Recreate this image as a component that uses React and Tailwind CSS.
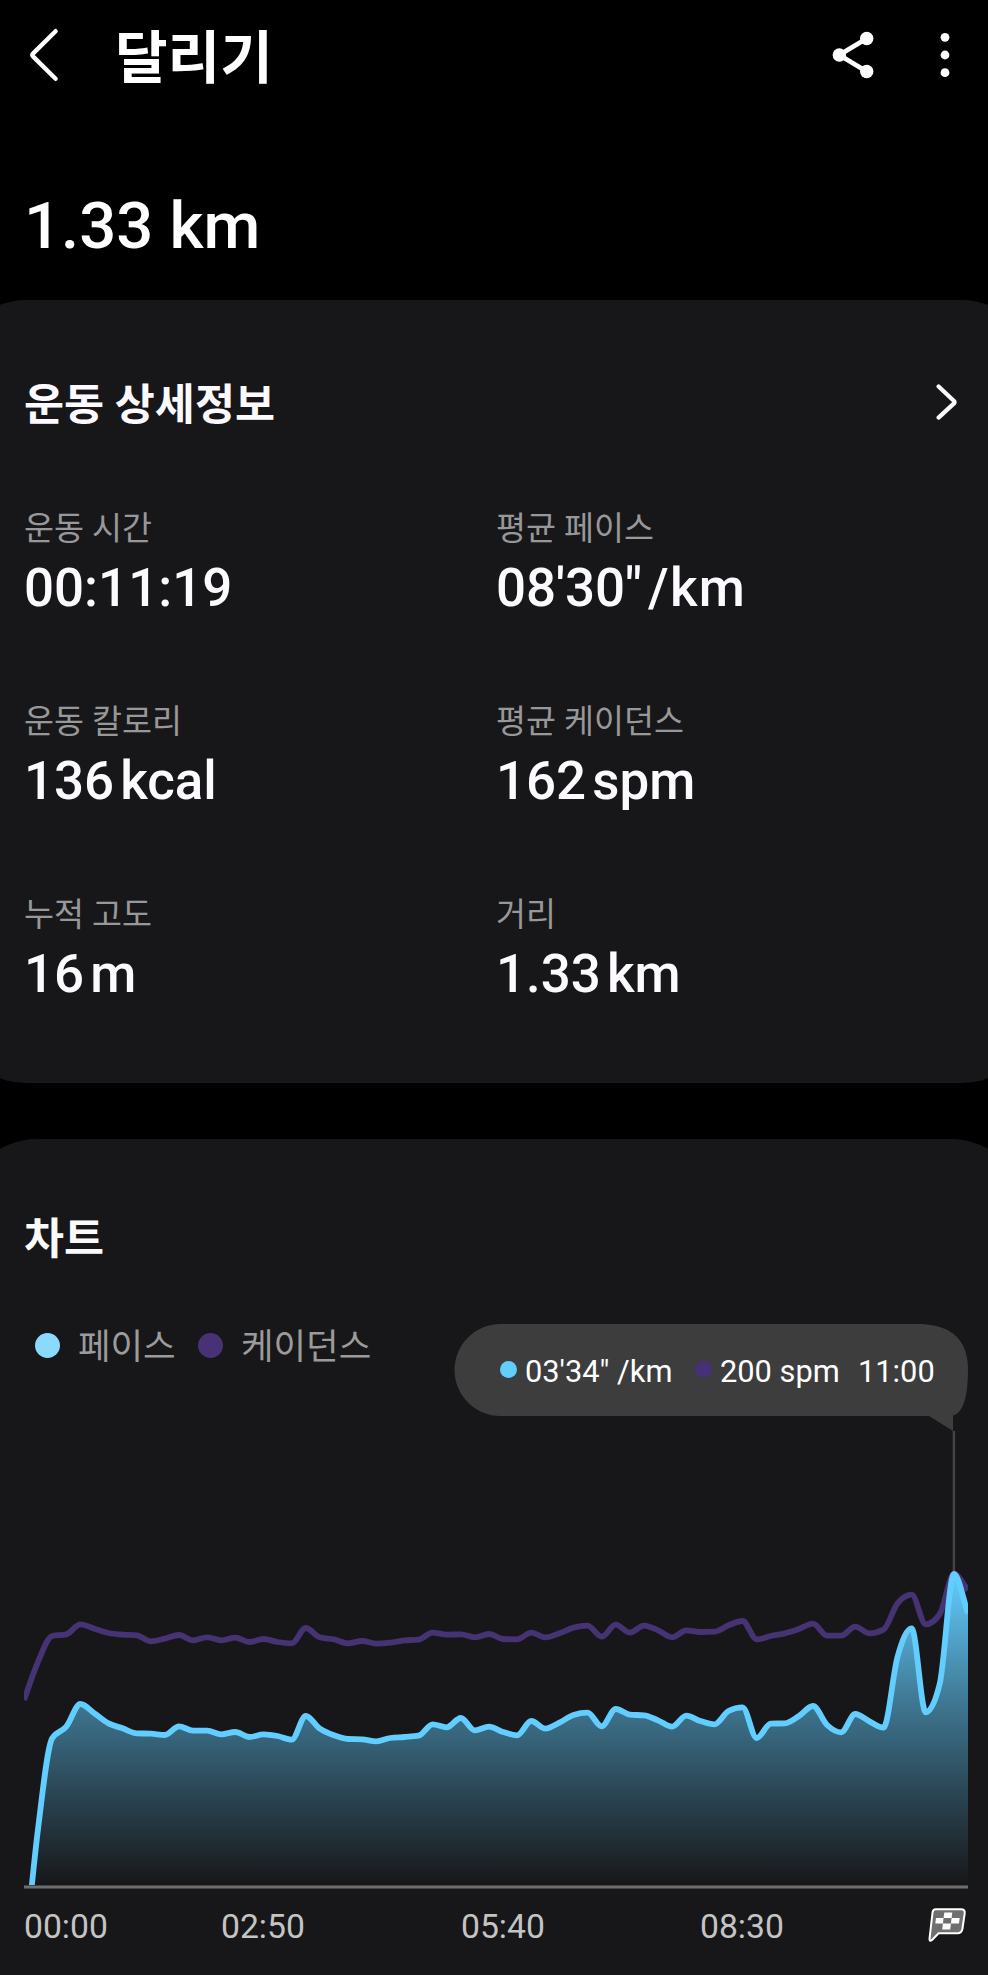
import React from "react";

const stats = [
  { label: "운동 시간", value: "00:11:19" },
  { label: "평균 페이스", value: "08'30\"", unit: "/km", unitClass: "tracking-[1.3px]" },
  { label: "운동 칼로리", value: "136", unit: "kcal" },
  { label: "평균 케이던스", value: "162", unit: "spm" },
  { label: "누적 고도", value: "16", unit: "m" },
  { label: "거리", value: "1.33", unit: "km" },
];

// samples every 10 seconds, measured down from the top of the plot
const pace = [
  1150, 745, 475, 440, 372, 400, 430, 445, 460, 461, 465, 439, 452, 452, 463, 456, 471,
  463, 468, 479, 408, 446, 466, 477, 478, 484, 474, 471, 467, 433, 442, 414, 451, 440,
  456, 466, 423, 446, 428, 405, 398, 439, 387, 404, 406, 421, 440, 407, 423, 433, 393,
  382, 474, 431, 430, 408, 378, 435, 457, 402, 424, 443, 230, 145, 397, 310, -18, 100,
];
const cadence = [
  360, 245, 168, 163, 133, 146, 159, 164, 166, 184, 176, 165, 181, 172, 181, 173, 186,
  177, 186, 190, 144, 172, 178, 190, 183, 191, 188, 181, 179, 158, 164, 163, 172, 162,
  177, 178, 158, 172, 160, 143, 137, 170, 134, 158, 137, 151, 172, 151, 156, 155, 136,
  123, 178, 168, 160, 147, 131, 167, 167, 140, 160, 149, 70, 44, 133, 102, -18, 30,
];

const WIDTH = 944;
const BASE = 455;

const toPoints = (data) =>
  data.map((v, i) => [(i * WIDTH) / (data.length - 1), 150 + v / 3]);

// monotone cubic curve, so peaks never overshoot the samples
function smoothPath(points) {
  const n = points.length;
  const h = points[1][0] - points[0][0];
  const slopes = points.slice(1).map((p, i) => (p[1] - points[i][1]) / h);
  const tangents = points.map((_, i) => {
    if (i === 0) return slopes[0];
    if (i === n - 1) return slopes[n - 2];
    const a = slopes[i - 1];
    const b = slopes[i];
    if (a * b <= 0) return 0;
    return Math.sign(a) * Math.min(Math.abs(a) * 2, Math.abs(b) * 2, Math.abs(a + b) / 2);
  });
  let d = `M${points[0][0]},${points[0][1]}`;
  for (let i = 1; i < n; i++) {
    const [x0, y0] = points[i - 1];
    const [x1, y1] = points[i];
    d += `C${x0 + h / 3},${y0 + (tangents[i - 1] * h) / 3} ${x1 - h / 3},${y1 - (tangents[i] * h) / 3} ${x1},${y1}`;
  }
  return d;
}

function Header() {
  return (
    <header className="flex h-[120px] items-center pl-7 pr-[35px]">
      <svg className="mb-[10px] h-14 w-8" viewBox="0 0 32 56" fill="none" stroke="white" strokeWidth="4.4" strokeLinecap="round" strokeLinejoin="round">
        <path d="M27.6 4.2 5.2 26.4q-1.6 1.6 0 3.2L27.6 51.8" />
      </svg>
      <h1 className="mb-[2px] ml-[55px] text-[57.2px] font-bold leading-none">달리기</h1>
      <svg className="mb-[10px] ml-auto h-12 w-11" viewBox="0 0 44 48" fill="white" stroke="white">
        <path d="M35.7 7.5 8.3 24l27.4 16.5" fill="none" strokeWidth="4.8" />
        <circle cx="8.3" cy="24" r="6.7" stroke="none" />
        <circle cx="35.7" cy="7.5" r="6.7" stroke="none" />
        <circle cx="35.7" cy="40.5" r="6.7" stroke="none" />
      </svg>
      <svg className="mb-[10px] ml-[62px] h-12 w-4" viewBox="0 0 16 48" fill="white">
        <circle cx="8" cy="6.3" r="4.4" />
        <circle cx="8" cy="24" r="4.4" />
        <circle cx="8" cy="41.7" r="4.4" />
      </svg>
    </header>
  );
}

function FlagIcon() {
  return (
    <svg className="h-[36px] w-[40px]" viewBox="0 0 40 36">
      <path
        d="M8.6 2.2H34q4.3 0 3.7 4.2L35.4 22q-.7 4.2-5 4.2H11.6L4.8 33.2q-2.4 1.6-2.3-1.4L5.6 5q.5-2.8 3-2.8z"
        fill="#6f6f6f"
        stroke="white"
        strokeWidth="2"
      />
      <path d="M17.3 5.6h8l-.7 5.4h-8zM9 11h7.6l-.7 5.6H8.3zM24.6 11h8.1l-.7 5.6h-8.1zM15.9 16.6h8l-.7 6h-8z" fill="white" />
    </svg>
  );
}

function Tooltip() {
  return (
    <div className="absolute right-5 top-[184px] h-[108px] w-[514px]">
      <svg className="absolute inset-0" width="514" height="108" viewBox="0 0 514 108" fill="#3d3d3d">
        <path d="M46.5 1H467.5Q514 3 514 47C514 74 509 90 499 92.6V108L475 93H46.5A46 46 0 0 1 46.5 1z" />
      </svg>
      <div className="relative flex h-[98px] items-center pl-[46px] text-[30.8px] leading-none text-white">
        <span className="mb-[6px] mr-4 size-[17px] rounded-full bg-[#62cdff]" />
        <span className="-ml-[8px] w-[170px]">03'34" /km</span>
        <span className="mb-[6px] size-[17px] rounded-full bg-[#463178]" />
        <span className="ml-[8px] w-[138px]">200 spm</span>
        <span>11:00</span>
      </div>
    </div>
  );
}

function Chart() {
  const paceLine = smoothPath(toPoints(pace));
  const cadenceLine = smoothPath(toPoints(cadence));

  return (
    <svg className="block" width={WIDTH} height="460" viewBox={`0 0 ${WIDTH} 460`}>
      <defs>
        <linearGradient id="fill" gradientUnits="userSpaceOnUse" x1="0" y1="144" x2="0" y2={BASE}>
          <stop offset="0" stopColor="#62cdff" />
          <stop offset="0.42" stopColor="#62cdff" stopOpacity="0.52" />
          <stop offset="0.7" stopColor="#62cdff" stopOpacity="0.26" />
          <stop offset="1" stopColor="#62cdff" stopOpacity="0" />
        </linearGradient>
        <clipPath id="plot">
          <rect width={WIDTH} height={BASE} />
        </clipPath>
      </defs>
      <rect x="928.7" y="1" width="2.4" height="143" fill="#444446" />
      <g clipPath="url(#plot)" fill="none" strokeWidth="5.8" strokeLinejoin="round">
        <path d={cadenceLine} stroke="#463374" />
        <path d={`${paceLine}V${BASE}H0z`} fill="url(#fill)" />
        <path d={paceLine} stroke="#62cdff" />
      </g>
      <rect y="455" width={WIDTH} height="4" fill="#444444" />
      <rect y="456" width={WIDTH} height="2" fill="#6e6e6e" />
    </svg>
  );
}

export default function App() {
  return (
    <main className="h-[1975px] w-[988px] overflow-hidden bg-black font-['Roboto','Noto_Sans_CJK_KR',sans-serif] text-white">
      <Header />
      <p className="h-[180px] pl-6 pt-[66px] text-[65.2px] font-medium leading-[80px]">1.33 km</p>

      <section className="-mx-[46px] h-[783px] rounded-[72px] bg-[#171719] px-[70px] pt-[76px] text-[#fcfaff]">
        <div className="flex h-[60px] items-center justify-between pr-[4px]">
          <h2 className="text-[43.5px] font-bold leading-none">운동 상세정보</h2>
          <svg className="-mt-[8px] h-10 w-6" viewBox="0 0 24 40" fill="none" stroke="#fcfaff" strokeWidth="4.2" strokeLinecap="round" strokeLinejoin="round">
            <path d="M2.6 4.4 18 19q1.2 1.2 0 2.4L2.6 35.6" />
          </svg>
        </div>
        <div className="mt-[73px] grid auto-rows-[193.2px] grid-cols-2 gap-x-[4px]">
          {stats.map((s) => (
            <div key={s.label}>
              <p className="text-[32.6px] leading-10 text-[#98989a]">{s.label}</p>
              <p className="mt-[7px] flex gap-[6px] text-[52.9px] font-medium leading-[64px]">
                <span>{s.value}</span>
                {s.unit && <span className={s.unitClass}>{s.unit}</span>}
              </p>
            </div>
          ))}
        </div>
      </section>

      <section className="relative -mx-[36px] mt-14 h-[900px] rounded-[73px] bg-[#171719] px-[60px] pt-[71px]">
        <h2 className="text-[43.5px] font-bold leading-[60px] text-[#fafafa]">차트</h2>
        <div className="mt-[48px] flex h-[60px] items-center pl-[11px] text-[35.4px] leading-none text-[#9b9b9b]">
          <span className="mb-[6px] mr-[18px] size-[25px] rounded-full bg-[#8adaff]" />
          <span className="w-[120px]">페이스</span>
          <span className="mb-[6px] mr-[18px] size-[25px] rounded-full bg-[#483275]" />
          <span>케이던스</span>
        </div>
        <div className="absolute inset-y-0 right-[36px]">
          <Tooltip />
        </div>
        <div className="mt-[52px]">
          <Chart />
        </div>
        <div className="mt-[15px] flex h-[44px] items-center text-[33.7px] leading-none text-[#c4c4c4]">
          <span className="w-[197px]">00:00</span>
          <span className="w-[240px]">02:50</span>
          <span className="w-[239px]">05:40</span>
          <span>08:30</span>
          <span className="-mr-[3px] -mt-[5px] ml-auto">
            <FlagIcon />
          </span>
        </div>
      </section>
    </main>
  );
}
